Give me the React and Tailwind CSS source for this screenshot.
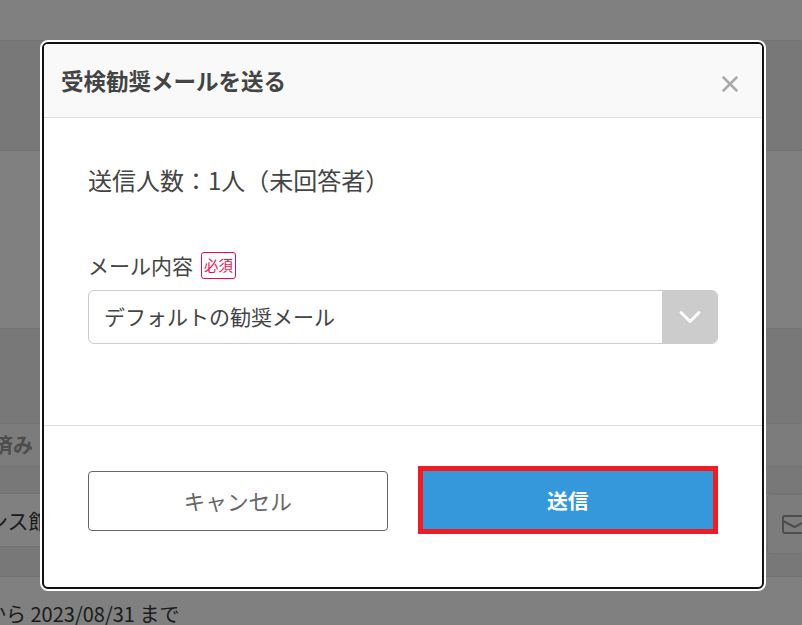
import React from "react";
import { X, ChevronDown } from "lucide-react";

export default function App() {
  return (
    <div className="relative h-[625px] w-[802px] overflow-hidden bg-[#808080] font-['Noto_Sans_CJK_JP','Noto_Sans',sans-serif] text-[#333]">
      {/* page behind the overlay */}
      <div className="h-[41px] border-b border-[#737373]" />
      <div className="h-[110px] border-b border-[#737373] bg-[#787878]" />
      <div className="h-[178px] border-b border-[#737373]" />
      <div className="h-[94px] bg-[#787878]" />
      <div className="flex h-[44px] items-center border-y border-[#737373] bg-[#7c7c7c] text-[20px] font-bold text-[#4d4d4d]">
        <span className="-ml-[7px]">済み</span>
      </div>
      <div className="h-[26px] bg-[#787878]" />
      <div className="relative h-[54px] border-y border-[#737373] bg-[#808080]">
        <span className="absolute -left-[13px] top-[8px] text-[21px] leading-[36px] text-[#1a1a1a]">ンス館</span>
        <span className="absolute left-[767px] top-0 flex h-[60px] w-[40px] items-center rounded-l-[4px] border border-[#737373] bg-[#7c7c7c] pl-[14px]">
          <svg width="25" height="19" viewBox="0 0 25 19" fill="none" stroke="#4d4d4d" strokeWidth="2" className="shrink-0">
            <rect x="1" y="1" width="23" height="17" rx="2" />
            <path d="M1 6l11.5 6L24 6" />
          </svg>
        </span>
      </div>
      <div className="h-[30px] border-b border-[#737373] bg-[#787878]" />
      <div className="-ml-[14px] pt-[24px] text-[20px] leading-[26px] text-[#1a1a1a]">から 2023/08/31 まで</div>

      {/* modal */}
      <div className="absolute left-[40px] top-[40px] h-[551px] w-[726px] rounded-[8px] border-[2px] border-white bg-white">
        <div className="flex h-full flex-col overflow-hidden rounded-[6px] border-[2px] border-[#111]">
          <div className="flex h-[74px] shrink-0 items-center justify-between border-b border-[#ddd] bg-[#f9f9f9] pl-[17px] pr-[19px]">
            <h2 className="text-[22.5px] font-bold leading-none text-[#444]">受検勧奨メールを送る</h2>
            <X className="mt-[6px] h-[26px] w-[26px] text-[#aaa]" strokeWidth={2.4} />
          </div>
          <div className="h-[308px] shrink-0 border-b border-[#ddd] px-[44px] pt-[44px]">
            <p className="text-[24px] leading-[36px] text-[#444]">送信人数：1人（未回答者）</p>
            <div className="mt-[52px] flex items-center gap-[8px]">
              <span className="text-[21px] leading-[30px] text-[#444]">メール内容</span>
              <span className="flex h-[27px] w-[35px] items-center justify-center rounded-[3px] border border-[#e6104f] text-[14.4px] text-[#e6104f]">必須</span>
            </div>
            <div className="mt-[10px] flex h-[54px] w-[630px] items-center justify-between overflow-hidden rounded-[6px] border border-[#ccc]">
              <span className="pl-[15px] text-[21px] text-[#444]">デフォルトの勧奨メール</span>
              <span className="flex h-[54px] w-[55px] items-center justify-center bg-[#ccc]">
                <ChevronDown className="h-[36px] w-[36px] text-white" strokeWidth={2} />
              </span>
            </div>
          </div>
          <div className="flex flex-1 items-center gap-[30px] px-[44px] pb-[12px]">
            <button className="h-[60px] w-[300px] rounded-[4px] border border-[#666] bg-white pt-[2px] text-[21.6px] text-[#666]">キャンセル</button>
            <button className="-mt-px h-[68px] w-[301px] border-[5px] border-[#ee1c25] bg-[#3498db] pt-[2px] text-[20.8px] font-bold text-white">送信</button>
          </div>
        </div>
      </div>
    </div>
  );
}
